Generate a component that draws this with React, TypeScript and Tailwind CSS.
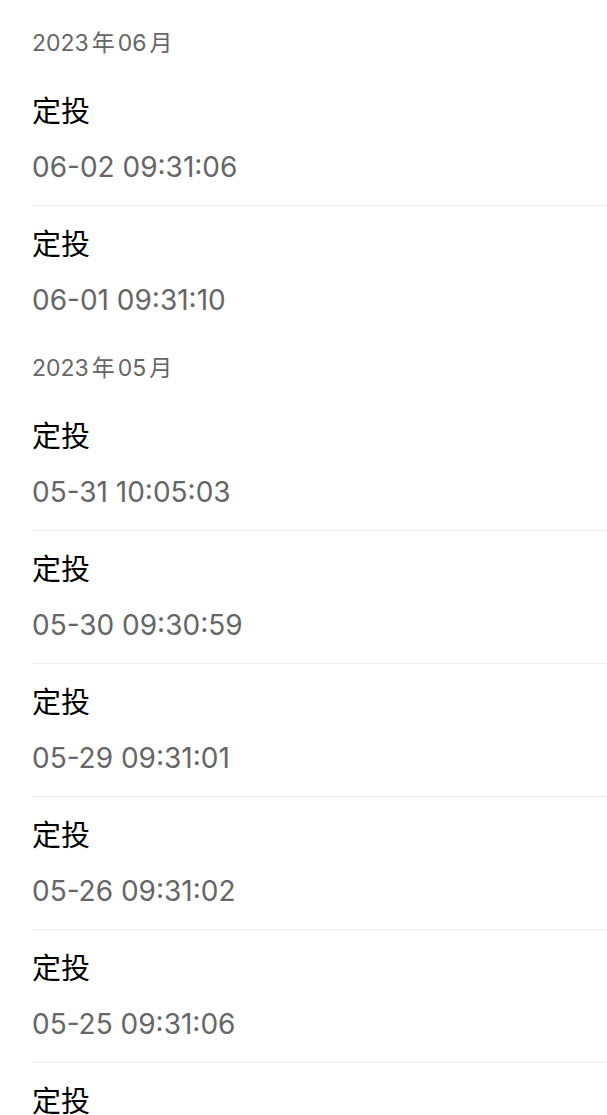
const sections = [
  {
    year: "2023",
    month: "06",
    items: ["06-02 09:31:06", "06-01 09:31:10"],
  },
  {
    year: "2023",
    month: "05",
    items: [
      "05-31 10:05:03",
      "05-30 09:30:59",
      "05-29 09:31:01",
      "05-26 09:31:02",
      "05-25 09:31:06",
      "05-24 09:31:04",
    ],
  },
];

export default function App() {
  return (
    <div
      className="min-h-screen bg-white pt-[14px]"
      style={{ fontFamily: 'Inter, "Noto Sans CJK SC", sans-serif' }}
    >
      {sections.map((s) => (
        <div key={s.month}>
          <div className="flex h-[59px] items-center pl-8 text-[23px] text-[#666]">
            <span>{s.year}</span>
            <span className="mx-[3px]">年</span>
            <span>{s.month}</span>
            <span className="ml-[3px]">月</span>
          </div>
          {s.items.map((time, i) => (
            <div
              key={time}
              className={
                "ml-8 box-border h-[133px] pt-[19px] " +
                (i < s.items.length - 1 ? "border-b border-[#ededed]" : "")
              }
            >
              <div className="text-[29px] leading-[40px] text-black">定投</div>
              <div className="mt-[15px] text-[28px] leading-[40px] text-[#666]">{time}</div>
            </div>
          ))}
        </div>
      ))}
    </div>
  );
}
